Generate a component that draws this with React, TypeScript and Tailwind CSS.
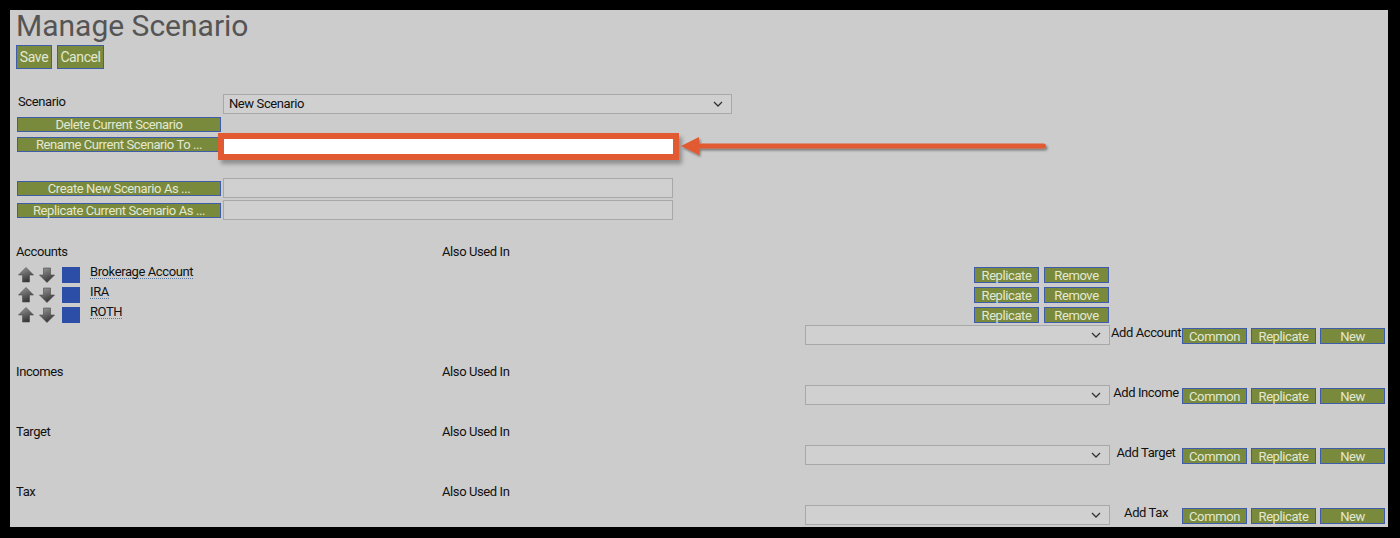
import type { ReactNode } from "react"

const accounts = ["Brokerage Account", "IRA", "ROTH"]

const sections = [
  { title: "Accounts", add: "Add Account", rows: accounts },
  { title: "Incomes", add: "Add Income", rows: [] as string[] },
  { title: "Target", add: "Add Target", rows: [] as string[] },
  { title: "Tax", add: "Add Tax", rows: [] as string[] },
]

function Btn({ children, className = "" }: { children: ReactNode; className?: string }) {
  return (
    <div
      className={`flex items-center justify-center border border-[#3f5cab] bg-[#7a8a3c] leading-none text-[#e3e8d3] whitespace-nowrap ${className}`}
    >
      {children}
    </div>
  )
}

function Chevron() {
  return (
    <svg width="10" height="6" viewBox="0 0 10 6" className="shrink-0">
      <path d="M1 1l4 4 4-4" fill="none" stroke="#333" strokeWidth="1.3" />
    </svg>
  )
}

function Dropdown({ className = "", text }: { className?: string; text?: string }) {
  return (
    <div
      className={`flex h-[20px] items-center justify-between border border-[#a8a8a8] bg-[#d0d0d0] pl-[5px] pr-[8px] text-[13px] text-[#111] ${className}`}
    >
      <span>{text}</span>
      <Chevron />
    </div>
  )
}

function MoveArrow({ down = false }: { down?: boolean }) {
  const id = down ? "gd" : "gu"
  return (
    <svg width="16" height="16" viewBox="0 0 16 16" className="shrink-0">
      <defs>
        <linearGradient id={id} x1="0" y1="0" x2="0.4" y2="1">
          <stop offset="0" stopColor="#9a9a9a" />
          <stop offset="0.5" stopColor="#6a6a6a" />
          <stop offset="1" stopColor="#383838" />
        </linearGradient>
      </defs>
      <path
        d={down ? "M8 15.5L15.5 8H11.5V1H4.5V8H0.5Z" : "M8 0.5L15.5 8H11.5V15H4.5V8H0.5Z"}
        fill={`url(#${id})`}
        stroke="#4a4a4a"
        strokeWidth="0.6"
      />
    </svg>
  )
}

function Pointer() {
  return (
    <svg width="370" height="26" viewBox="0 0 370 26" className="absolute left-[457px] top-[-4px]">
      <defs>
        <filter id="ds" x="-5%" y="-50%" width="110%" height="200%">
          <feDropShadow dx="1.5" dy="2" stdDeviation="1.2" floodColor="#000" floodOpacity="0.4" />
        </filter>
      </defs>
      <g filter="url(#ds)" fill="#e15a32">
        <path d="M0 11L18 2V20Z" />
        <rect x="14" y="8.5" width="351" height="5" rx="2.5" />
      </g>
    </svg>
  )
}

export default function App() {
  return (
    <div className="min-h-screen bg-black pl-[10px] pt-[10px] font-['Roboto',sans-serif]">
      <div className="h-[517px] w-[1378px] bg-[#cccccc] pl-[6px] tracking-[-0.4px]">
        <h1 className="text-[30px] leading-[32px] tracking-[0px] text-[#555]">Manage Scenario</h1>
        <div className="mt-[3px] flex gap-[5px]">
          <Btn className="h-[24px] w-[36px] text-[14px]">Save</Btn>
          <Btn className="h-[24px] w-[47px] text-[14px]">Cancel</Btn>
        </div>

        <div className="mt-[25px] pl-[1px]">
          <div className="flex">
            <div className="w-[206px] pl-[1px] text-[13px] leading-[15px] text-[#111]">Scenario</div>
            <Dropdown className="w-[509px]" text="New Scenario" />
          </div>
          <Btn className="mt-[3px] h-[15px] w-[204px] text-[13px]">Delete Current Scenario</Btn>
          <div className="mt-[5px] flex items-start">
            <Btn className="h-[15px] w-[204px] text-[13px]">Rename Current Scenario To ...</Btn>
            <div className="relative ml-[3px] mt-[2px] h-[15px] w-[449px] bg-white shadow-[0_0_0_6px_#e15a32,3px_4px_4px_6px_rgba(0,0,0,0.3)]">
              <Pointer />
            </div>
          </div>
          <div className="mt-[24px] flex items-start">
            <Btn className="mt-[3px] h-[15px] w-[204px] text-[13px]">Create New Scenario As ...</Btn>
            <div className="ml-[2px] h-[20px] w-[450px] border border-[#a8a8a8] bg-[#d0d0d0]" />
          </div>
          <div className="mt-[2px] flex items-start">
            <Btn className="mt-[3px] h-[15px] w-[204px] text-[13px]">Replicate Current Scenario As ...</Btn>
            <div className="ml-[2px] h-[20px] w-[450px] border border-[#a8a8a8] bg-[#d0d0d0]" />
          </div>
        </div>

        <div className="mt-[24px] flex flex-col gap-[19px]">
          {sections.map((s) => (
            <div key={s.title}>
              <div className="flex text-[13px] leading-[16px] text-[#111]">
                <div className="w-[426px]">{s.title}</div>
                <div>Also Used In</div>
              </div>
              <div className="mt-[5px]">
                {s.rows.map((name) => (
                  <div key={name} className="flex h-[20px] items-start">
                    <div className="flex w-[958px] items-start">
                      <div className="ml-[2px] mt-[2px] flex items-start">
                        <MoveArrow />
                        <div className="ml-[5px]">
                          <MoveArrow down />
                        </div>
                        <div className="ml-[7px] h-[16px] w-[18px] bg-[#2d4ea6]" />
                      </div>
                      <span className="ml-[10px] border-b border-dotted border-[#5b7ba6] text-[13px] leading-[13px] text-[#111]">
                        {name}
                      </span>
                    </div>
                    <div className="mt-[2px] flex gap-[5px]">
                      <Btn className="h-[16px] w-[65px] text-[13px]">Replicate</Btn>
                      <Btn className="h-[16px] w-[65px] text-[13px]">Remove</Btn>
                    </div>
                  </div>
                ))}
              </div>
              <div className="flex h-[20px] items-start">
                <div className="w-[789px]" />
                <Dropdown className="w-[305px] justify-end" />
                <div className="w-[72px] whitespace-nowrap text-center text-[13px] leading-[15px] text-[#111]">
                  {s.add}
                </div>
                <div className="mt-[3px] flex gap-[4px]">
                  <Btn className="h-[16px] w-[65px] text-[13px]">Common</Btn>
                  <Btn className="h-[16px] w-[65px] text-[13px]">Replicate</Btn>
                  <Btn className="h-[16px] w-[65px] text-[13px]">New</Btn>
                </div>
              </div>
            </div>
          ))}
        </div>
      </div>
    </div>
  )
}
